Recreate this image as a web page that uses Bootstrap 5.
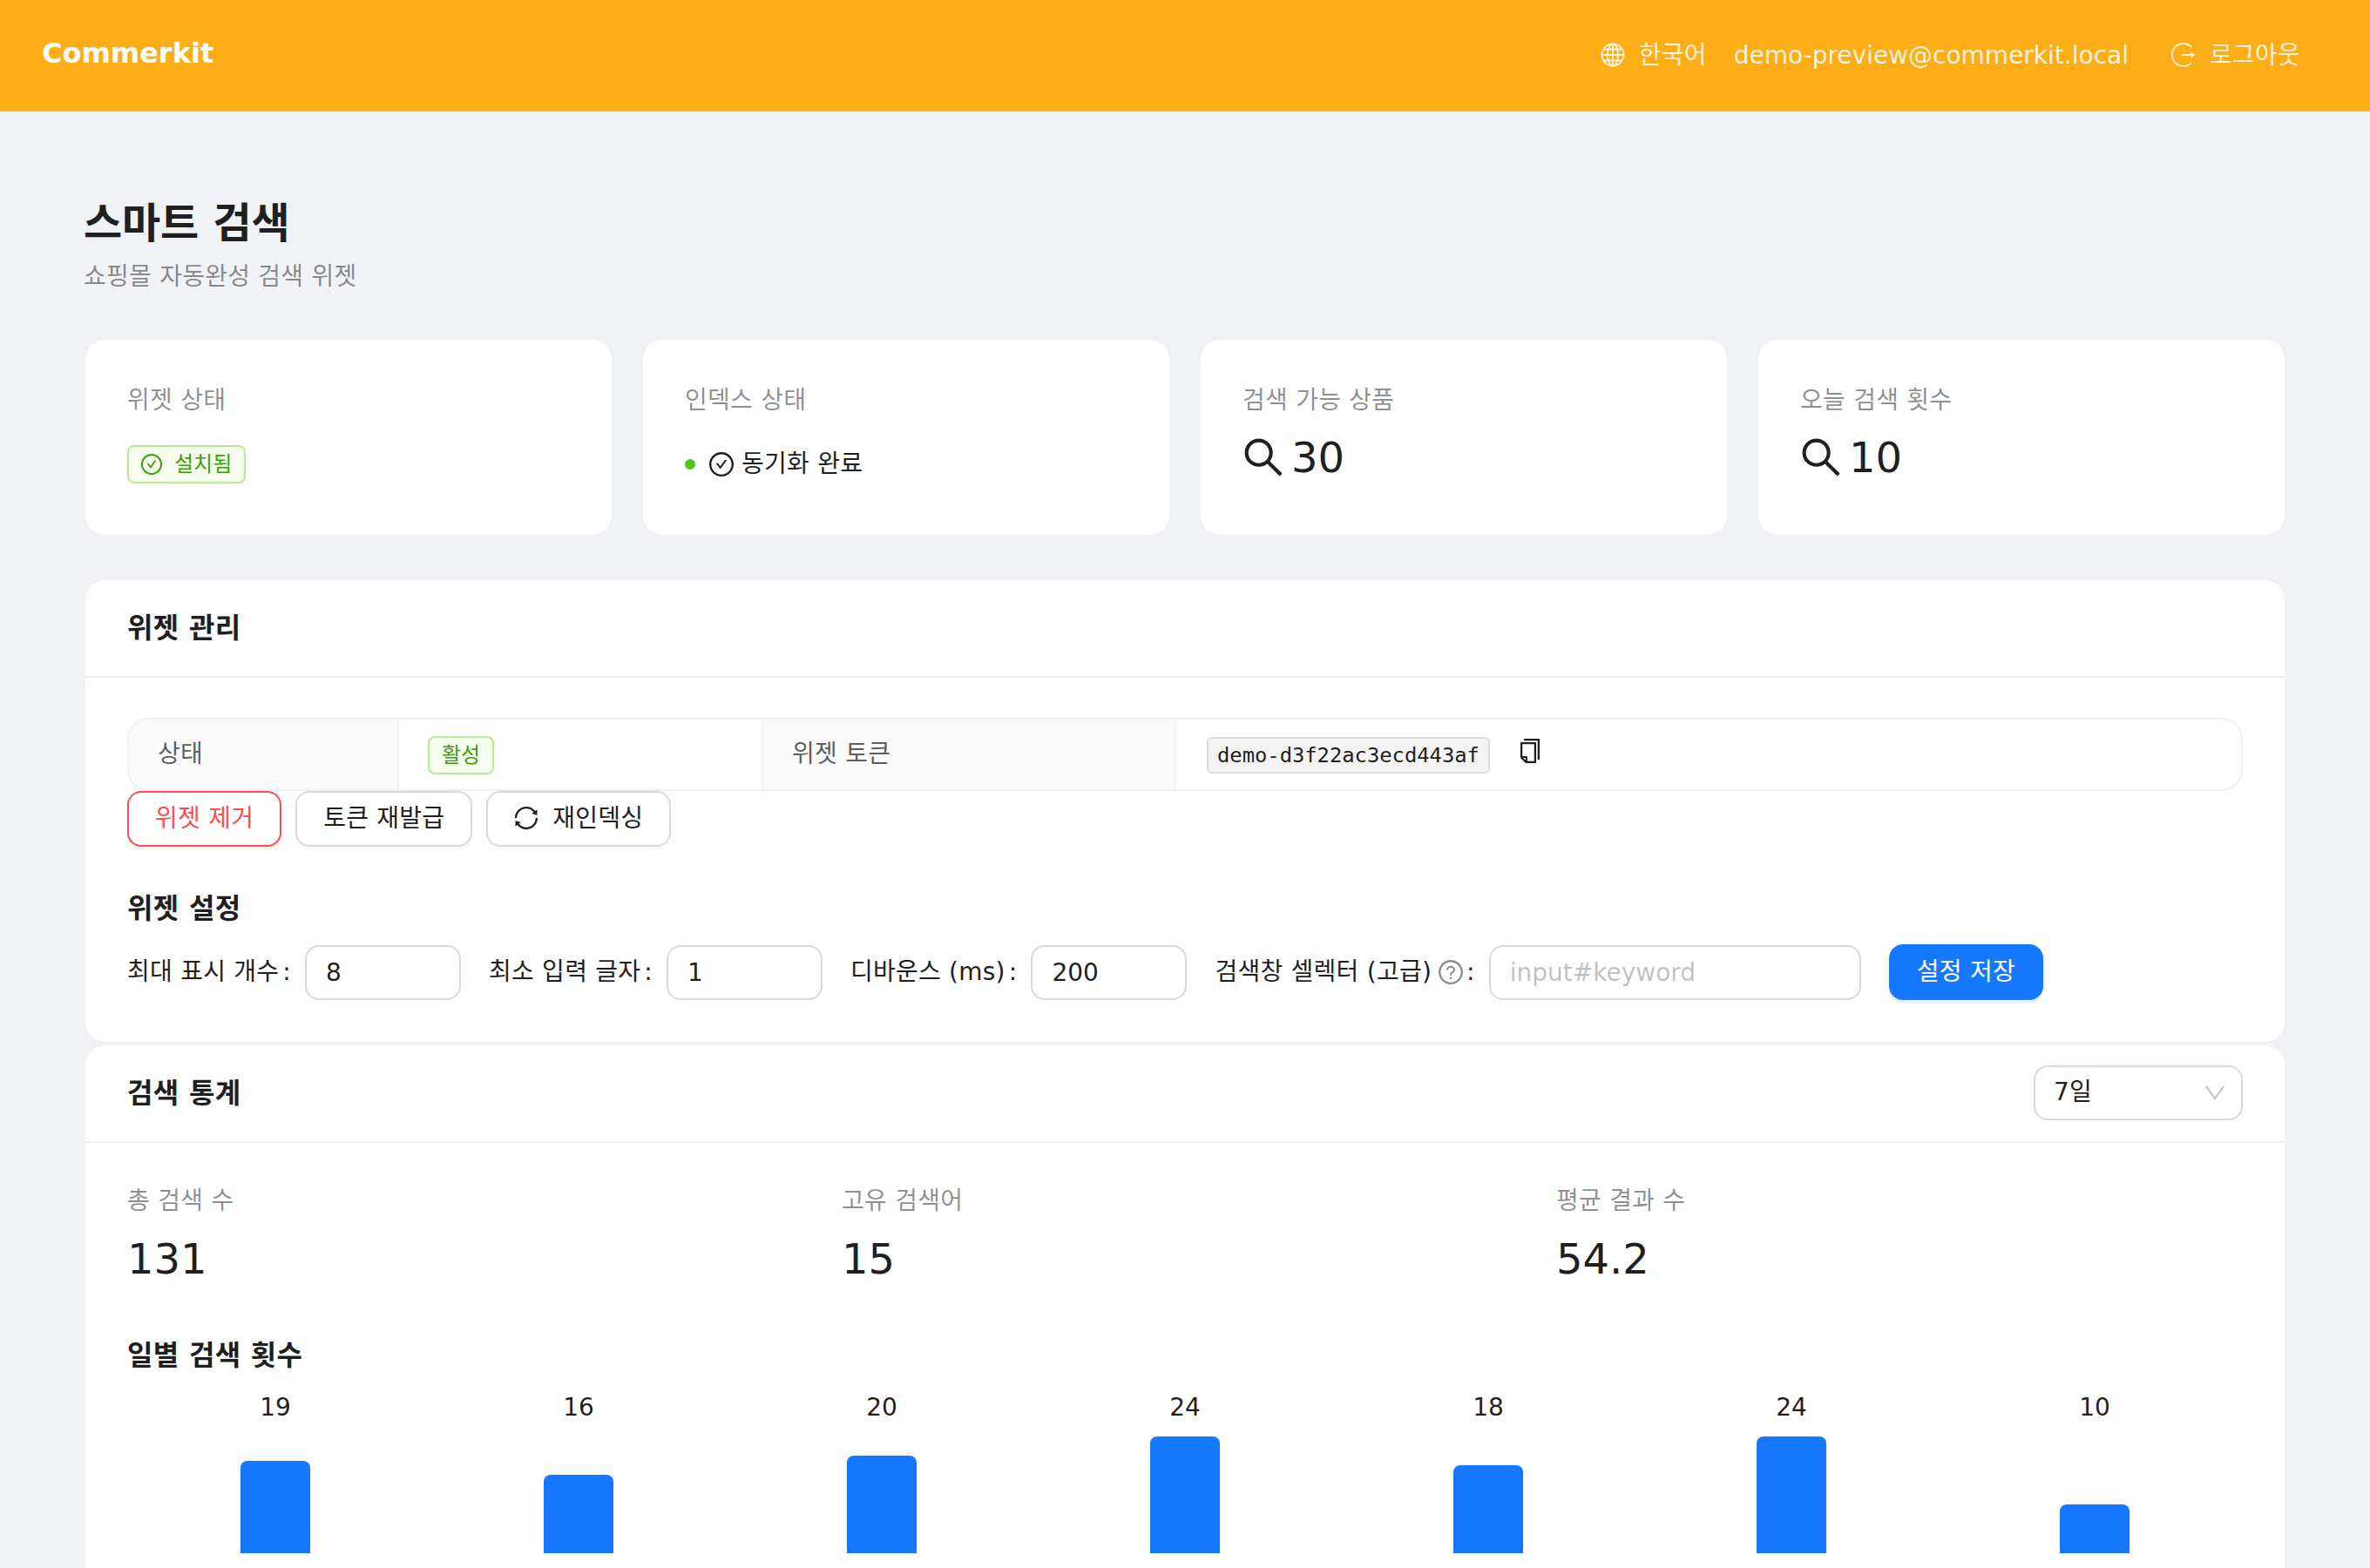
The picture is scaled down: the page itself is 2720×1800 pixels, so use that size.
<!DOCTYPE html>
<html lang="ko">
<head>
    <meta charset="UTF-8">
    <meta name="viewport" content="width=device-width, initial-scale=1.0">
    <title>Commerkit - 스마트 검색</title>
    <link href="https://cdn.jsdelivr.net/npm/bootstrap@5.3.0/dist/css/bootstrap.min.css" rel="stylesheet">
    <style>
        html, body { height: 100vh; overflow: hidden; }
        body {
            background: #f0f2f5;
            color: #1f1f1f;
            font-family: "DejaVu Sans", "Noto Sans CJK KR", sans-serif;
            font-size: 28px;
            line-height: 44px;
            letter-spacing: .24px;
        }
        svg.ico { width: 1em; height: 1em; fill: currentColor; flex: none; }

        /* header */
        .top-bar { background: #fdae17; height: 128px; padding: 0 80px 0 48px; color: rgba(255,255,255,.85); }
        .top-brand { color: #fff; font-size: 32px; font-weight: 700; line-height: 48px; padding: 0; margin: 0 0 6px; letter-spacing: 0; }
        .top-link { gap: 16px; margin-left: 31px; }
        .top-link svg.ico { margin-top: -2px; }
        .top-link.out { margin-left: 49px; }
        .top-mail { letter-spacing: 0; }

        /* page */
        .page-wrap { padding: 96px 96px 0; }
        .page-title { font-size: 48px; font-weight: 700; line-height: 64px; margin: 0; letter-spacing: -.16px; }
        .page-sub { color: rgba(0,0,0,.45); line-height: 44px; margin: 8px 0 48px; }

        .stat-row { --bs-gutter-x: 32px; margin-bottom: 48px; }
        .stat-card { border: 2px solid #f0f0f0; border-radius: 24px; height: 228px; padding: 48px 48px 0; }
        .stat-label { color: rgba(0,0,0,.45); }
        .stat-value { font-size: 48px; line-height: 72px; gap: 8px; margin-top: 7px; letter-spacing: 0; }
        .stat-value svg.ico { width: 48px; height: 48px; }

        .tag-ok {
            display: inline-flex; align-items: center; gap: 14px;
            background: #f6ffed; border: 2px solid #b7eb8f; border-radius: 8px;
            color: #389e0d; font-size: 24px; line-height: 40px; padding: 0 14px; letter-spacing: 0;
        }
        .tag-ok svg.ico { width: 24px; height: 24px; }
        .sync-state { gap: 16px; margin-top: 29px; line-height: 44px; }
        .sync-dot { width: 12px; height: 12px; border-radius: 50%; background: #52c41a; }
        .sync-text { gap: 9px; }

        .panel { border: 2px solid #f0f0f0; border-radius: 24px; background: #fff; }
        .panel .card-header {
            background: transparent; border-bottom: 2px solid #f0f0f0;
            height: 112px; padding: 0 48px; border-radius: 22px 22px 0 0;
        }
        .panel-title { font-size: 32px; font-weight: 700; margin: 0; letter-spacing: .3px; }
        .panel-body { padding: 46px 48px 0; }
        .panel-body.stats { padding-top: 45px; }

        .info-box { border: 2px solid #f0f0f0; border-radius: 24px; overflow: hidden; height: 84px; }
        .info-table { margin: 0; table-layout: fixed; height: 80px; --bs-table-bg: transparent; }
        .info-table td { padding: 0 33px; border: 0; border-left: 2px solid #f0f0f0; vertical-align: middle; line-height: 44px; color: #1f1f1f; }
        .info-table td:first-child { border-left: 0; }
        .info-table td:last-child { padding-left: 35px; }
        .info-table td.lbl { background: #fafafa; color: rgba(0,0,0,.65); }
        .info-table .tag-ok { margin-top: -2px; }
        .c-a { width: 309px; } .c-b { width: 418px; } .c-c { width: 474px; }
        .token-code {
            display: inline-block; background: #f3f3f3; border: 2px solid #dcdcdc; border-radius: 6px; letter-spacing: 0;
            color: #1f1f1f; font-family: "DejaVu Sans Mono", monospace; font-size: 23.8px; line-height: 38px; padding: 0 10px;
        }
        .copy-ico { font-size: 28px; margin-left: 23px; vertical-align: -1px; }

        .act-row { gap: 16px; }
        .act-btn {
            height: 64px; border: 2px solid #d9d9d9; border-radius: 16px; background: #fff;
            color: #1f1f1f; font-size: 28px; line-height: 44px; padding: 0 30px; letter-spacing: .24px;
            box-shadow: 0 4px 0 rgba(0,0,0,.02); display: inline-flex; align-items: center; gap: 16px;
        }
        .act-btn svg.ico { margin-top: -3px; }
        .act-btn.danger { border-color: #ff4d4f; color: #ff4d4f; box-shadow: 0 4px 0 rgba(255,38,5,.06); }
        .act-btn.prim { background: #1677ff; border-color: #1677ff; color: #fff; box-shadow: 0 4px 0 rgba(5,145,255,.1); }

        .sub-title { font-size: 32px; font-weight: 700; line-height: 44px; margin: 49px 0 19px; letter-spacing: .3px; }
        .set-form { padding-bottom: 48px; }
        .set-item { display: flex; align-items: center; margin-right: 32px; }
        .set-item label { margin: 0 16px 0 0; white-space: nowrap; display: inline-flex; align-items: center; }
        .set-item label svg.ico { color: rgba(0,0,0,.45); margin-left: 8px; font-size: 28px; }
        .lbl-colon { margin-left: 4px; }
        .set-input {
            width: 179px; height: 63px; border: 2px solid #d9d9d9; border-radius: 16px;
            font-size: 28px; line-height: 44px; padding: 0 22px; color: #1f1f1f; box-shadow: none;
        }
        .set-input.wide { width: 427px; }
        .set-input::placeholder { color: rgba(0,0,0,.25); }
        .range-pick {
            width: 240px; height: 63px; border: 2px solid #d9d9d9; border-radius: 16px; padding: 0 19px 0 21px; margin-top: -2px;
        }
        .range-pick span { margin-top: -1px; }
        .range-pick svg.ico { color: rgba(0,0,0,.25); width: 22px; height: 22px; }

        .sum-row { --bs-gutter-x: 32px; }
        .sum-label { color: rgba(0,0,0,.45); }
        .sum-value { font-size: 48px; line-height: 72px; margin-top: 8px; letter-spacing: 0; }
        .chart-title { font-size: 32px; font-weight: 700; line-height: 44px; margin: 53px 0 18px; letter-spacing: .3px; }
        .bar-chart { height: 240px; margin: 0 -4px; }
        .bar-col { flex: 1 1 0; }
        .bar-num { line-height: 40px; letter-spacing: 0; }
        .bar-area { height: 147px; }
        .bar-fill { width: 80px; background: #1677ff; border-radius: 8px 8px 0 0; }
    </style>
</head>
<body>
    <!-- header -->
    <nav class="navbar top-bar d-flex justify-content-between align-items-center flex-nowrap">
        <a class="navbar-brand top-brand" href="#">Commerkit</a>
        <div class="d-flex align-items-center">
            <span class="d-flex align-items-center top-link">
                <svg class="ico" viewBox="0 0 28 28" style="fill:none" stroke="currentColor" stroke-width="1.8">
                    <circle cx="14" cy="14" r="12.6"/><ellipse cx="14" cy="14" rx="6" ry="12.6"/>
                    <path d="M14 1.4v25.2M1.4 14h25.2M3.4 7.5h21.2M3.4 20.5h21.2"/>
                </svg>
                한국어
            </span>
            <span class="top-link top-mail d-flex">demo-preview@commerkit.local</span>
            <span class="d-flex align-items-center top-link out">
                <svg class="ico" viewBox="0 0 28 28" style="fill:none" stroke="currentColor" stroke-width="1.8">
                    <path d="M23 4.9A13 13 0 1 0 23 23.1"/><path d="M12 14h11"/>
                    <path d="M22.5 10.5l5 3.5-5 3.5z" fill="currentColor" stroke="none"/>
                </svg>
                로그아웃
            </span>
        </div>
    </nav>

    <main class="page-wrap">
        <h1 class="page-title">스마트 검색</h1>
        <p class="page-sub">쇼핑몰 자동완성 검색 위젯</p>

        <!-- status cards -->
        <div class="row stat-row">
            <div class="col-3">
                <div class="card stat-card">
                    <div class="stat-label">위젯 상태</div>
                    <div class="sync-state"><span class="tag-ok">
                        <svg class="ico" viewBox="64 64 896 896"><path d="M699 353h-46.9c-10.2 0-19.9 4.9-25.9 13.3L469 584.3l-71.2-98.8c-6-8.3-15.6-13.3-25.9-13.3H325c-6.5 0-10.3 7.4-6.5 12.7l124.6 172.8a31.8 31.8 0 0051.7 0l210.6-292c3.9-5.3.1-12.7-6.4-12.7z"/><path d="M512 64C264.6 64 64 264.6 64 512s200.6 448 448 448 448-200.6 448-448S759.4 64 512 64zm0 820c-205.4 0-372-166.6-372-372s166.6-372 372-372 372 166.6 372 372-166.6 372-372 372z"/></svg>
                        설치됨</span></div>
                </div>
            </div>
            <div class="col-3">
                <div class="card stat-card">
                    <div class="stat-label">인덱스 상태</div>
                    <div class="d-flex align-items-center sync-state">
                        <span class="sync-dot"></span>
                        <span class="d-flex align-items-center sync-text">
                            <svg class="ico" viewBox="64 64 896 896"><path d="M699 353h-46.9c-10.2 0-19.9 4.9-25.9 13.3L469 584.3l-71.2-98.8c-6-8.3-15.6-13.3-25.9-13.3H325c-6.5 0-10.3 7.4-6.5 12.7l124.6 172.8a31.8 31.8 0 0051.7 0l210.6-292c3.9-5.3.1-12.7-6.4-12.7z"/><path d="M512 64C264.6 64 64 264.6 64 512s200.6 448 448 448 448-200.6 448-448S759.4 64 512 64zm0 820c-205.4 0-372-166.6-372-372s166.6-372 372-372 372 166.6 372 372-166.6 372-372 372z"/></svg>
                            동기화 완료
                        </span>
                    </div>
                </div>
            </div>
            <div class="col-3">
                <div class="card stat-card">
                    <div class="stat-label">검색 가능 상품</div>
                    <div class="d-flex align-items-center stat-value">
                        <svg class="ico" viewBox="64 64 896 896"><path d="M909.6 854.5L649.9 594.8C690.2 542.7 712 479 712 412c0-80.2-31.3-155.4-87.9-212.1-56.6-56.7-132-87.9-212.1-87.9s-155.5 31.3-212.1 87.9C143.2 256.5 112 331.8 112 412c0 80.1 31.3 155.5 87.9 212.1C256.5 680.8 331.8 712 412 712c67 0 130.6-21.8 182.7-62l259.7 259.6a8.2 8.2 0 0011.6 0l43.6-43.5a8.2 8.2 0 000-11.6zM570.4 570.4C528 612.7 471.8 636 412 636s-116-23.3-158.4-65.6C211.3 528 188 471.8 188 412s23.3-116.1 65.6-158.4C296 211.3 352.2 188 412 188s116.1 23.2 158.4 65.6S636 352.2 636 412s-23.3 116.1-65.6 158.4z"/></svg>
                        30
                    </div>
                </div>
            </div>
            <div class="col-3">
                <div class="card stat-card">
                    <div class="stat-label">오늘 검색 횟수</div>
                    <div class="d-flex align-items-center stat-value">
                        <svg class="ico" viewBox="64 64 896 896"><path d="M909.6 854.5L649.9 594.8C690.2 542.7 712 479 712 412c0-80.2-31.3-155.4-87.9-212.1-56.6-56.7-132-87.9-212.1-87.9s-155.5 31.3-212.1 87.9C143.2 256.5 112 331.8 112 412c0 80.1 31.3 155.5 87.9 212.1C256.5 680.8 331.8 712 412 712c67 0 130.6-21.8 182.7-62l259.7 259.6a8.2 8.2 0 0011.6 0l43.6-43.5a8.2 8.2 0 000-11.6zM570.4 570.4C528 612.7 471.8 636 412 636s-116-23.3-158.4-65.6C211.3 528 188 471.8 188 412s23.3-116.1 65.6-158.4C296 211.3 352.2 188 412 188s116.1 23.2 158.4 65.6S636 352.2 636 412s-23.3 116.1-65.6 158.4z"/></svg>
                        10
                    </div>
                </div>
            </div>
        </div>

        <!-- widget management -->
        <div class="card panel">
            <div class="card-header d-flex align-items-center">
                <h2 class="panel-title">위젯 관리</h2>
            </div>
            <div class="panel-body">
                <div class="info-box">
                    <table class="table info-table">
                        <colgroup><col class="c-a"><col class="c-b"><col class="c-c"><col></colgroup>
                        <tbody>
                            <tr>
                                <td class="lbl">상태</td>
                                <td><span class="tag-ok">활성</span></td>
                                <td class="lbl">위젯 토큰</td>
                                <td>
                                    <code class="token-code">demo-d3f22ac3ecd443af</code>
                                    <svg class="ico copy-ico" viewBox="64 64 896 896"><path d="M832 64H296c-4.4 0-8 3.6-8 8v56c0 4.4 3.6 8 8 8h496v688c0 4.4 3.6 8 8 8h56c4.4 0 8-3.6 8-8V96c0-17.7-14.3-32-32-32zM704 192H192c-17.7 0-32 14.3-32 32v530.7c0 8.5 3.4 16.6 9.4 22.6l173.3 173.3c2.2 2.2 4.7 4 7.4 5.5v1.9h4.2c3.5 1.3 7.2 2 11 2H704c17.7 0 32-14.3 32-32V224c0-17.7-14.3-32-32-32zM350 856.2L263.9 770H350v86.2zM664 888H414V746c0-22.1-17.9-40-40-40H232V264h432v624z"/></svg>
                                </td>
                            </tr>
                        </tbody>
                    </table>
                </div>
                <div class="d-flex act-row">
                    <button type="button" class="btn act-btn danger">위젯 제거</button>
                    <button type="button" class="btn act-btn">토큰 재발급</button>
                    <button type="button" class="btn act-btn">
                        <svg class="ico" viewBox="64 64 896 896"><path d="M168 504.2c1-43.7 10-86.1 26.9-126 17.3-41 42.1-77.7 73.7-109.4S337 212.3 378 195c42.4-17.9 87.4-27 133.9-27s91.5 9.1 133.8 27A341.5 341.5 0 01755 268.8c9.9 9.9 19.2 20.4 27.8 31.4l-60.2 47a8 8 0 003 14.1l175.7 43c5 1.2 9.9-2.6 9.9-7.7l.8-180.9c0-6.7-7.7-10.5-12.9-6.3l-56.4 44.1C765.8 155.1 646.2 92 511.8 92 282.7 92 96.3 275.6 92 503.8a8 8 0 008 8.2h60c4.4 0 7.9-3.5 8-7.8zm756 7.8h-60c-4.4 0-7.9 3.5-8 7.8-1 43.7-10 86.1-26.9 126-17.3 41-42.1 77.8-73.7 109.4A342.45 342.45 0 01512.1 856a342.24 342.24 0 01-243.2-100.8c-9.9-9.9-19.2-20.4-27.8-31.4l60.2-47a8 8 0 00-3-14.1l-175.7-43c-5-1.2-9.9 2.6-9.9 7.7l-.7 181c0 6.7 7.7 10.5 12.9 6.3l56.4-44.1C258.2 868.9 377.8 932 512.2 932c229.2 0 415.5-183.7 419.8-411.8a8 8 0 00-8-8.2z"/></svg>
                        재인덱싱
                    </button>
                </div>

                <h3 class="sub-title">위젯 설정</h3>
                <form class="d-flex align-items-center set-form">
                    <div class="set-item"><label for="maxItems">최대 표시 개수<span class="lbl-colon">:</span></label><input id="maxItems" class="form-control set-input" value="8"></div>
                    <div class="set-item"><label for="minChars">최소 입력 글자<span class="lbl-colon">:</span></label><input id="minChars" class="form-control set-input" value="1"></div>
                    <div class="set-item"><label for="debounce">디바운스 (ms)<span class="lbl-colon">:</span></label><input id="debounce" class="form-control set-input" value="200"></div>
                    <div class="set-item">
                        <label for="selector">검색창 셀렉터 (고급)<svg class="ico" viewBox="64 64 896 896"><path d="M512 64C264.6 64 64 264.6 64 512s200.6 448 448 448 448-200.6 448-448S759.4 64 512 64zm0 820c-205.4 0-372-166.6-372-372s166.6-372 372-372 372 166.6 372 372-166.6 372-372 372z"/><path d="M623.6 316.7C593.6 290.4 554 276 512 276s-81.6 14.5-111.6 40.7C369.2 344 352 380.7 352 420v7.6c0 4.4 3.6 8 8 8h48c4.4 0 8-3.6 8-8V420c0-44.1 43.1-80 96-80s96 35.9 96 80c0 31.1-22 59.6-56.1 72.7-21.2 8.1-39.2 22.3-52.1 40.9-13.1 19-19.9 41.8-19.9 64.9V620c0 4.4 3.6 8 8 8h48c4.4 0 8-3.6 8-8v-22.7a48.3 48.3 0 0130.9-44.8c59-22.7 97.1-74.7 97.1-132.5.1-39.3-17.1-76-48.3-103.3zM472 732a40 40 0 1080 0 40 40 0 10-80 0z"/></svg><span class="lbl-colon">:</span></label>
                        <input id="selector" class="form-control set-input wide" placeholder="input#keyword">
                    </div>
                    <button type="button" class="btn act-btn prim">설정 저장</button>
                </form>
            </div>
        </div>

        <!-- search stats -->
        <div class="card panel">
            <div class="card-header d-flex align-items-center justify-content-between">
                <h2 class="panel-title">검색 통계</h2>
                <div class="d-flex align-items-center justify-content-between range-pick">
                    <span>7일</span>
                    <svg class="ico" viewBox="0 0 22 22" style="fill:none" stroke="currentColor" stroke-width="2"><path d="M1 4l10 14 10-14"/></svg>
                </div>
            </div>
            <div class="panel-body stats">
                <div class="row sum-row">
                    <div class="col-4"><div class="sum-label">총 검색 수</div><div class="sum-value">131</div></div>
                    <div class="col-4"><div class="sum-label">고유 검색어</div><div class="sum-value">15</div></div>
                    <div class="col-4"><div class="sum-label">평균 결과 수</div><div class="sum-value">54.2</div></div>
                </div>
                <h3 class="chart-title">일별 검색 횟수</h3>
                <div class="d-flex bar-chart">
                    <div class="bar-col d-flex flex-column align-items-center"><div class="bar-num">19</div><div class="bar-area d-flex align-items-end"><div class="bar-fill" style="height:106px"></div></div></div>
                    <div class="bar-col d-flex flex-column align-items-center"><div class="bar-num">16</div><div class="bar-area d-flex align-items-end"><div class="bar-fill" style="height:90px"></div></div></div>
                    <div class="bar-col d-flex flex-column align-items-center"><div class="bar-num">20</div><div class="bar-area d-flex align-items-end"><div class="bar-fill" style="height:112px"></div></div></div>
                    <div class="bar-col d-flex flex-column align-items-center"><div class="bar-num">24</div><div class="bar-area d-flex align-items-end"><div class="bar-fill" style="height:134px"></div></div></div>
                    <div class="bar-col d-flex flex-column align-items-center"><div class="bar-num">18</div><div class="bar-area d-flex align-items-end"><div class="bar-fill" style="height:101px"></div></div></div>
                    <div class="bar-col d-flex flex-column align-items-center"><div class="bar-num">24</div><div class="bar-area d-flex align-items-end"><div class="bar-fill" style="height:134px"></div></div></div>
                    <div class="bar-col d-flex flex-column align-items-center"><div class="bar-num">10</div><div class="bar-area d-flex align-items-end"><div class="bar-fill" style="height:56px"></div></div></div>
                </div>
            </div>
        </div>
    </main>

    <script src="https://cdn.jsdelivr.net/npm/bootstrap@5.3.0/dist/js/bootstrap.bundle.min.js"></script>
</body>
</html>
